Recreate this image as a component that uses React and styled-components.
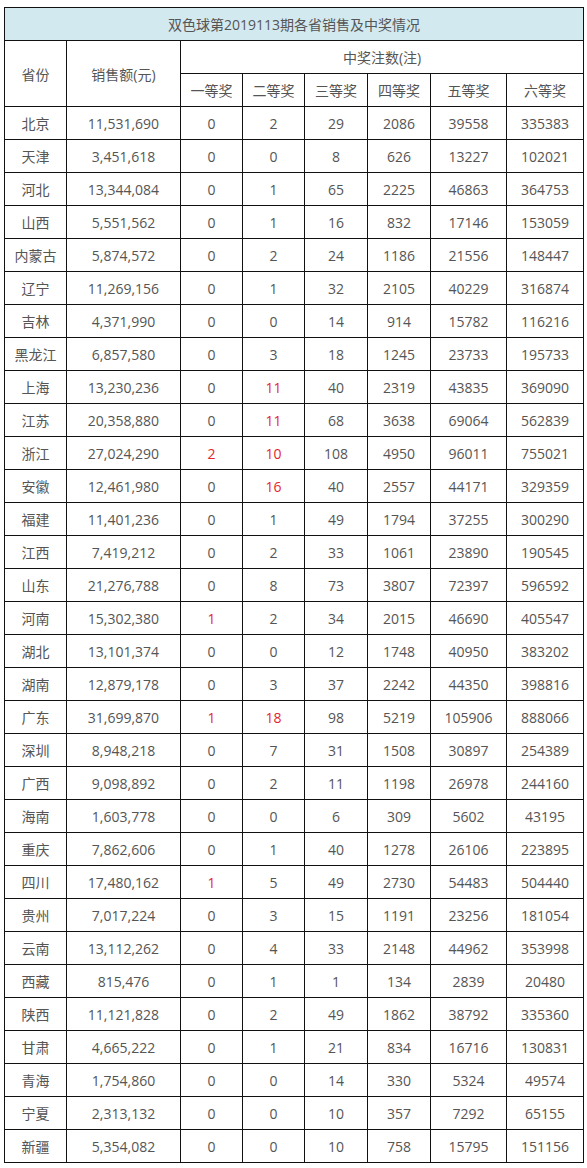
import styled, { createGlobalStyle } from "styled-components"

const GlobalStyle = createGlobalStyle`
  body { margin: 0; background: #fff; }
`

const rows = [
  ["北京", "11,531,690", "0", "2", "29", "2086", "39558", "335383"],
  ["天津", "3,451,618", "0", "0", "8", "626", "13227", "102021"],
  ["河北", "13,344,084", "0", "1", "65", "2225", "46863", "364753"],
  ["山西", "5,551,562", "0", "1", "16", "832", "17146", "153059"],
  ["内蒙古", "5,874,572", "0", "2", "24", "1186", "21556", "148447"],
  ["辽宁", "11,269,156", "0", "1", "32", "2105", "40229", "316874"],
  ["吉林", "4,371,990", "0", "0", "14", "914", "15782", "116216"],
  ["黑龙江", "6,857,580", "0", "3", "18", "1245", "23733", "195733"],
  ["上海", "13,230,236", "0", "11", "40", "2319", "43835", "369090"],
  ["江苏", "20,358,880", "0", "11", "68", "3638", "69064", "562839"],
  ["浙江", "27,024,290", "2", "10", "108", "4950", "96011", "755021"],
  ["安徽", "12,461,980", "0", "16", "40", "2557", "44171", "329359"],
  ["福建", "11,401,236", "0", "1", "49", "1794", "37255", "300290"],
  ["江西", "7,419,212", "0", "2", "33", "1061", "23890", "190545"],
  ["山东", "21,276,788", "0", "8", "73", "3807", "72397", "596592"],
  ["河南", "15,302,380", "1", "2", "34", "2015", "46690", "405547"],
  ["湖北", "13,101,374", "0", "0", "12", "1748", "40950", "383202"],
  ["湖南", "12,879,178", "0", "3", "37", "2242", "44350", "398816"],
  ["广东", "31,699,870", "1", "18", "98", "5219", "105906", "888066"],
  ["深圳", "8,948,218", "0", "7", "31", "1508", "30897", "254389"],
  ["广西", "9,098,892", "0", "2", "11", "1198", "26978", "244160"],
  ["海南", "1,603,778", "0", "0", "6", "309", "5602", "43195"],
  ["重庆", "7,862,606", "0", "1", "40", "1278", "26106", "223895"],
  ["四川", "17,480,162", "1", "5", "49", "2730", "54483", "504440"],
  ["贵州", "7,017,224", "0", "3", "15", "1191", "23256", "181054"],
  ["云南", "13,112,262", "0", "4", "33", "2148", "44962", "353998"],
  ["西藏", "815,476", "0", "1", "1", "134", "2839", "20480"],
  ["陕西", "11,121,828", "0", "2", "49", "1862", "38792", "335360"],
  ["甘肃", "4,665,222", "0", "1", "21", "834", "16716", "130831"],
  ["青海", "1,754,860", "0", "0", "14", "330", "5324", "49574"],
  ["宁夏", "2,313,132", "0", "0", "10", "357", "7292", "65155"],
  ["新疆", "5,354,082", "0", "0", "10", "758", "15795", "151156"],
]

const colWidths = [62, 114, 62, 62, 63, 63, 76, 77]
const prizes = ["一等奖", "二等奖", "三等奖", "四等奖", "五等奖", "六等奖"]

// 一等奖 any win, 二等奖 ten or more: shown in red
const isHot = (col, val) =>
  (col === 2 && Number(val) > 0) || (col === 3 && Number(val) >= 10)

const Page = styled.div`
  padding: 7px 0 0 4px;
`

const Table = styled.table`
  width: 580px;
  table-layout: fixed;
  border-collapse: collapse;
  font-family: "Open Sans", "Noto Sans CJK SC", sans-serif;
  font-size: 14px;
  color: #555;
`

const Cell = styled.td`
  height: 32px;
  padding: 0;
  border: 1px solid #111;
  text-align: center;
  vertical-align: middle;
  color: ${p => (p.$hot ? "#e3262f" : "#555")};
`

const Title = styled(Cell)`
  background: #d3e9f0;
`

const App = () => (
  <Page>
    <GlobalStyle />
    <Table>
      <colgroup>
        {colWidths.map((w, i) => (
          <col key={i} style={{ width: w }} />
        ))}
      </colgroup>
      <tbody>
        <tr>
          <Title colSpan={8}>双色球第2019113期各省销售及中奖情况</Title>
        </tr>
        <tr>
          <Cell rowSpan={2}>省份</Cell>
          <Cell rowSpan={2}>销售额(元)</Cell>
          <Cell colSpan={6}>中奖注数(注)</Cell>
        </tr>
        <tr>
          {prizes.map(p => (
            <Cell key={p}>{p}</Cell>
          ))}
        </tr>
        {rows.map(r => (
          <tr key={r[0]}>
            {r.map((v, i) => (
              <Cell key={i} $hot={isHot(i, v)}>
                {v}
              </Cell>
            ))}
          </tr>
        ))}
      </tbody>
    </Table>
  </Page>
)

export default App
